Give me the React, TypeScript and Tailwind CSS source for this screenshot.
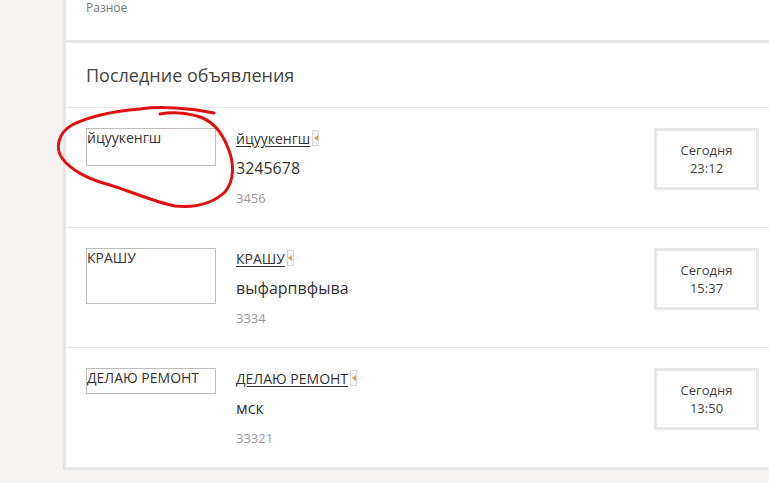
import React from "react";

type Ad = {
  id: number;
  title: string;
  text: string;
  price: string;
  time: string;
  imgH: string;
};

const ads: Ad[] = [
  { id: 1, title: "йцуукенгш", text: "3245678", price: "3456", time: "23:12", imgH: "h-[38px]" },
  { id: 2, title: "КРАШУ", text: "выфарпвфыва", price: "3334", time: "15:37", imgH: "h-[56px]" },
  { id: 3, title: "ДЕЛАЮ РЕМОНТ", text: "мск", price: "33321", time: "13:50", imgH: "h-[26px]" },
];

function Marker() {
  return (
    <span className="ml-[2px] inline-flex h-[16px] w-[7px] items-center justify-center border border-[#d6d6d6] bg-[#f7f7f7] align-middle">
      <svg width="4" height="6" viewBox="0 0 4 6">
        <path d="M4 0 L0 3 L4 6 Z" fill="#f0a020" />
      </svg>
    </span>
  );
}

// hand-drawn red annotation over the first ad
function Scribble() {
  return (
    <svg
      className="pointer-events-none absolute left-0 top-0"
      width="769"
      height="483"
      viewBox="0 0 769 483"
    >
      <path
        d="M214 113 C190 108 160 106 140 109 C115 111 90 116 72 125 C58 133 55 148 62 158 C70 170 90 180 110 185 C135 193 155 202 175 206 C195 208 212 204 225 192 C235 180 234 162 228 148 C222 132 212 120 197 116 C182 112 170 112 160 114"
        fill="none"
        stroke="#e01010"
        strokeWidth="3"
        strokeLinecap="round"
        strokeLinejoin="round"
      />
    </svg>
  );
}

export default function App() {
  return (
    <div
      className="relative flex h-[483px] w-[769px] overflow-hidden bg-[#f4f3f1]"
      style={{ fontFamily: '"Open Sans", "Noto Sans", sans-serif' }}
    >
      <div className="w-[63px] shrink-0" />
      <div className="flex h-[470px] flex-1 flex-col border-b-[3px] border-l-[3px] border-[#e6e6e6] bg-white">
        <div className="h-[43px] shrink-0 border-b-[3px] border-[#e8e8e8] pl-[20px] pt-[1px] text-[12px] leading-[14px] text-[#777]">
          Разное
        </div>
        <div className="flex h-[65px] shrink-0 items-center border-b border-[#e6e6e6] pl-[20px] text-[18px] text-[#444]">
          Последние объявления
        </div>
        {ads.map((ad, i) => (
          <div
            key={ad.id}
            className={`flex items-start pl-[20px] pt-[20px] ${
              i < ads.length - 1 ? "h-[120px] shrink-0 border-b border-[#e6e6e6]" : "flex-1"
            }`}
          >
            <div
              className={`w-[130px] shrink-0 border border-[#bdbdbd] text-[14px] leading-[17px] text-[#333] ${ad.imgH}`}
            >
              {ad.title}
            </div>
            <div className="ml-[20px] flex-1">
              <div className="flex h-[20px] items-center text-[14px] text-[#333]">
                <a className="underline underline-offset-2" href="#">
                  {ad.title}
                </a>
                <Marker />
              </div>
              <div className="mt-[10px] text-[16px] leading-[20px] text-[#333]">{ad.text}</div>
              <div className="mt-[10px] text-[13px] leading-[20px] text-[#999]">{ad.price}</div>
            </div>
            <div className="mr-[10px] flex h-[62px] w-[105px] shrink-0 flex-col items-center justify-center border-[3px] border-[#e8e8e8] text-[13px] leading-[18px] text-[#444]">
              <span>Сегодня</span>
              <span>{ad.time}</span>
            </div>
          </div>
        ))}
      </div>
      <Scribble />
    </div>
  );
}
